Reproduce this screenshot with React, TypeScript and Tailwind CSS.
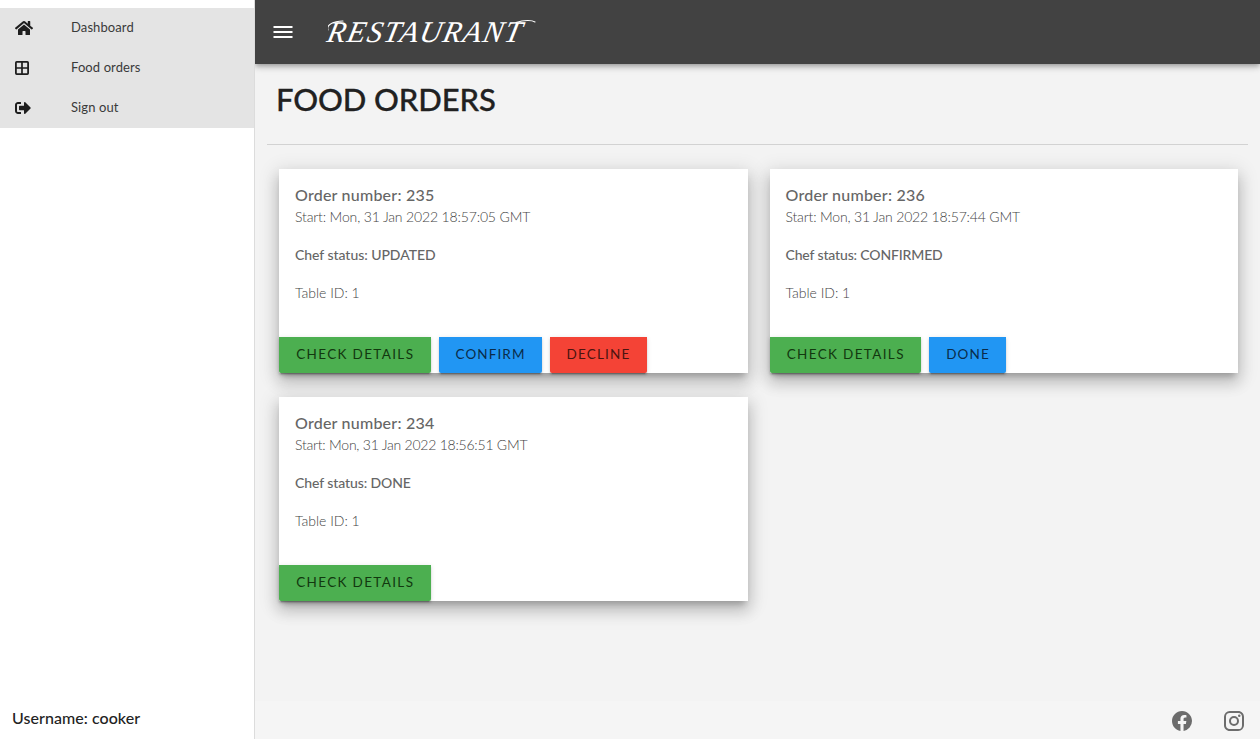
import React from "react";
import { FaHome, FaSignOutAlt } from "react-icons/fa";

type Action = { label: string; className: string };
type Order = { id: number; start: string; status: string; startClass: string; statusClass: string; actions: Action[] };

const details: Action = { label: "CHECK DETAILS", className: "w-[151.5px] bg-[#4caf50] text-[#12380f] tracking-[1.35px]" };

const orders: Order[] = [
  {
    id: 235,
    start: "Mon, 31 Jan 2022 18:57:05 GMT",
    status: "UPDATED",
    startClass: "tracking-[-0.15px]",
    statusClass: "tracking-[-0.05px]",
    actions: [
      details,
      { label: "CONFIRM", className: "w-[103px] bg-[#2196f3] text-[#0a2c49] tracking-[1.1px]" },
      { label: "DECLINE", className: "w-[97px] bg-[#f44336] text-[#4a1410] tracking-[1.2px]" },
    ],
  },
  {
    id: 236,
    start: "Mon, 31 Jan 2022 18:57:44 GMT",
    status: "CONFIRMED",
    startClass: "tracking-[-0.17px]",
    statusClass: "tracking-[-0.15px]",
    actions: [details, { label: "DONE", className: "w-[77px] bg-[#2196f3] text-[#0a2c49] tracking-[1.1px]" }],
  },
  {
    id: 234,
    start: "Mon, 31 Jan 2022 18:56:51 GMT",
    status: "DONE",
    startClass: "tracking-[-0.23px]",
    statusClass: "tracking-[-0.1px]",
    actions: [details],
  },
];

function GridIcon() {
  return (
    <svg width="14" height="14" viewBox="0 0 14 14" fill="none" stroke="currentColor">
      <rect x="0.9" y="0.9" width="12.2" height="12.2" rx="0.8" strokeWidth="1.8" />
      <path d="M7 1v12M1 7h12" strokeWidth="1.7" />
    </svg>
  );
}

function NavItem({ icon, label }: { icon: React.ReactNode; label: string }) {
  return (
    <li className="flex h-10 items-center pl-[15px]">
      <span className="flex w-14 items-center text-[#1e1e1e]">{icon}</span>
      <span className="pb-0.5 text-[13px] leading-5 tracking-[0.1px] text-[#3a3a3a]">{label}</span>
    </li>
  );
}

function OrderCard({ order }: { order: Order }) {
  return (
    <article className="flex h-[204px] flex-col bg-white text-[#666] shadow-[0_6px_6px_-3px_rgba(0,0,0,0.2),0_10px_14px_1px_rgba(0,0,0,0.14),0_4px_18px_3px_rgba(0,0,0,0.12)]">
      <div className="flex-1 whitespace-nowrap px-4 pt-[15px]">
        <h2 className="text-[16px] leading-[22px] font-medium tracking-[0.22px]">Order number: {order.id}</h2>
        <p className={`text-[14px] leading-[22px] font-light text-[#444] ${order.startClass}`}>Start: {order.start}</p>
        <p className={`mt-4 text-[14px] leading-[22px] font-medium ${order.statusClass}`}>Chef status: {order.status}</p>
        <p className="mt-4 text-[14px] leading-[22px] font-light text-[#444]">Table ID: 1</p>
      </div>
      <div className="flex h-9 gap-2">
        {order.actions.map((a) => (
          <button
            key={a.label}
            className={`h-9 rounded-b-[2px] pb-0.5 pl-px text-center text-[13.5px] leading-5 whitespace-nowrap shadow-[0_3px_1px_-2px_rgba(0,0,0,0.2),0_2px_2px_0_rgba(0,0,0,0.14),0_1px_5px_0_rgba(0,0,0,0.12)] ${a.className}`}
          >
            {a.label}
          </button>
        ))}
      </div>
    </article>
  );
}

export default function App() {
  return (
    <div className="flex h-[739px] w-[1260px] overflow-hidden bg-[#f3f3f3] font-['Lato','Open_Sans',sans-serif]">
      <aside className="relative z-20 flex w-[255px] shrink-0 flex-col border-r border-[#dcdcdc] bg-white pt-2">
        <ul className="bg-[#e4e4e4]">
          <NavItem icon={<FaHome size={18} />} label="Dashboard" />
          <NavItem icon={<GridIcon />} label="Food orders" />
          <NavItem icon={<FaSignOutAlt size={16} />} label="Sign out" />
        </ul>
        <div className="mt-auto h-[33px] pl-3 text-[16px] leading-6 font-medium tracking-[0.05px] text-[#222]">Username: cooker</div>
      </aside>
      <div className="flex min-w-0 flex-1 flex-col">
        <header className="z-10 flex h-16 shrink-0 items-center bg-[#424242] pl-4 text-white shadow-[0_2px_4px_-1px_rgba(0,0,0,0.2),0_4px_5px_0_rgba(0,0,0,0.14),0_1px_10px_0_rgba(0,0,0,0.12)]">
          <svg width="24" height="24" viewBox="0 0 24 24" fill="currentColor">
            <path d="M2.5 6h19v2h-19zM2.5 11h19v2h-19zM2.5 16h19v2h-19z" />
          </svg>
          <div className="relative ml-[33px]">
            <span className="block -skew-x-12 font-['Liberation_Serif',serif] text-[30px] leading-none tracking-[1.6px] whitespace-nowrap italic">RESTAURANT</span>
            <svg className="absolute -top-1 left-0" width="216" height="36" viewBox="0 0 216 36" fill="none" stroke="currentColor" strokeLinecap="round">
              <path d="M0 17C-2 11 6 8.500 15 8" strokeWidth="1.1" />
              <path d="M188 9.500C196 7 204 7 207 9" strokeWidth="1.1" />
            </svg>
          </div>
        </header>
        <main className="flex-1 px-3">
          <h1 className="flex h-[81px] items-center border-b border-[#d2d2d2] pb-2.5 pl-[9px] text-[31px] font-medium tracking-[-0.1px] text-[#212121] [-webkit-text-stroke:0.3px_#212121]">FOOD ORDERS</h1>
          <section className="grid grid-cols-2 gap-x-[22px] gap-y-6 pt-6 pr-2.5 pl-3">
            {orders.map((o) => (
              <OrderCard key={o.id} order={o} />
            ))}
          </section>
        </main>
        <footer className="flex h-[38px] shrink-0 items-center justify-end gap-7 bg-[#f5f5f5] pt-0.5 pr-3.5 text-[#6c6c6c]">
          <svg width="24" height="24" viewBox="0 0 24 24" fill="currentColor">
            <path d="M12 2.04C6.5 2.04 2 6.53 2 12.06C2 17.06 5.66 21.21 10.44 21.96V14.96H7.9V12.06H10.44V9.85C10.44 7.34 11.93 5.96 14.22 5.96C15.31 5.96 16.45 6.15 16.45 6.15V8.62H15.19C13.95 8.62 13.56 9.39 13.56 10.18V12.06H16.34L15.89 14.96H13.56V21.96A10 10 0 0 0 22 12.06C22 6.53 17.5 2.04 12 2.04Z" />
          </svg>
          <svg width="24" height="24" viewBox="0 0 24 24" fill="currentColor">
            <path d="M7.8,2H16.2C19.4,2 22,4.6 22,7.8V16.2A5.8,5.8 0 0,1 16.2,22H7.8C4.6,22 2,19.4 2,16.2V7.8A5.8,5.8 0 0,1 7.8,2M7.6,4A3.6,3.6 0 0,0 4,7.6V16.4C4,18.39 5.61,20 7.6,20H16.4A3.6,3.6 0 0,0 20,16.4V7.6C20,5.61 18.39,4 16.4,4H7.6M17.25,5.5A1.25,1.25 0 0,1 18.5,6.75A1.25,1.25 0 0,1 17.25,8A1.25,1.25 0 0,1 16,6.75A1.25,1.25 0 0,1 17.25,5.5M12,7A5,5 0 0,1 17,12A5,5 0 0,1 12,17A5,5 0 0,1 7,12A5,5 0 0,1 12,7M12,9A3,3 0 0,0 9,12A3,3 0 0,0 12,15A3,3 0 0,0 15,12A3,3 0 0,0 12,9Z" />
          </svg>
        </footer>
      </div>
    </div>
  );
}
